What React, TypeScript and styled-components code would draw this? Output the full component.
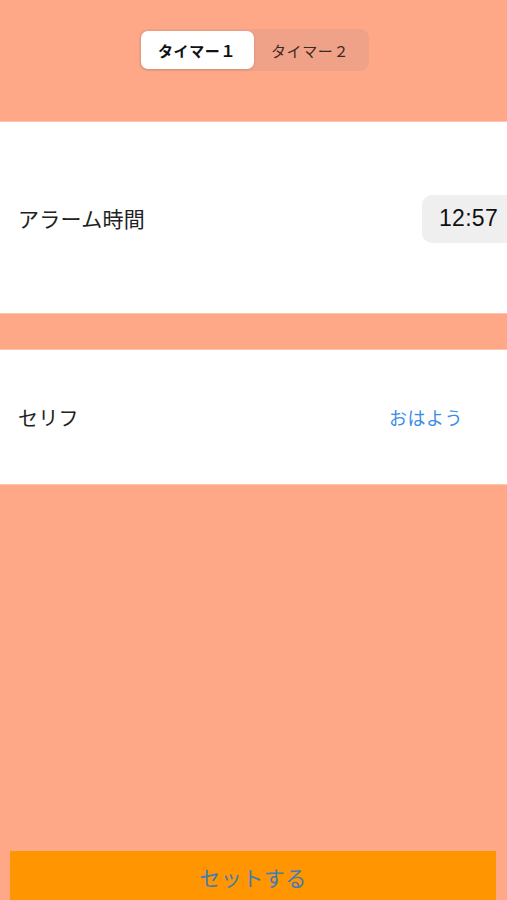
import React, { useState } from "react";
import styled, { createGlobalStyle } from "styled-components";

const GlobalStyle = createGlobalStyle`
  html, body {
    margin: 0;
    padding: 0;
    background: #FEA887;
  }
  body {
    font-family: "Noto Sans CJK JP", "Noto Sans", "Liberation Sans", sans-serif;
    -webkit-font-smoothing: antialiased;
  }
`;

const Page = styled.div`
  width: 507px;
  height: 900px;
  display: flex;
  flex-direction: column;
  background: #FEA887;
  overflow: hidden;
`;

const Header = styled.div`
  height: 122px;
  display: flex;
  justify-content: center;
  align-items: flex-start;
  padding-top: 29px;
  padding-left: 0;
  box-sizing: border-box;
  border-bottom: 1px solid #FFC3AE;
`;

const Segmented = styled.div`
  display: flex;
  padding: 2px;
  border-radius: 9px;
  background: #EFA287;
  height: 42px;
  box-sizing: border-box;
`;

const Segment = styled.button<{ $active: boolean }>`
  width: 113px;
  border: none;
  border-radius: 7px;
  margin: 0;
  padding: 0;
  font-family: inherit;
  font-size: 15px;
  letter-spacing: 0.6px;
  font-weight: ${(p) => (p.$active ? 700 : 400)};
  color: ${(p) => (p.$active ? "#111" : "#3a2a24")};
  background: ${(p) => (p.$active ? "#ffffff" : "transparent")};
  box-shadow: ${(p) => (p.$active ? "0 1px 3px rgba(0,0,0,0.12)" : "none")};
  cursor: pointer;
`;

const Section = styled.div<{ $height: number }>`
  height: ${(p) => p.$height}px;
  background: #ffffff;
  display: flex;
  align-items: center;
  justify-content: space-between;
  padding-left: 18px;
  box-sizing: border-box;
`;

const Gap = styled.div`
  height: 35px;
  border-top: 1px solid #FFC3AE;
  border-bottom: 1px solid #FFC3AE;
  box-sizing: content-box;
`;

const Label = styled.span<{ $size: number }>`
  font-size: ${(p) => p.$size}px;
  color: #222;
  letter-spacing: 0.3px;
`;

const TimePill = styled.div`
  width: 85px;
  height: 48px;
  margin-top: 2px;
  background: #EFEFF0;
  border-radius: 10px 0 0 10px;
  display: flex;
  align-items: center;
  padding-left: 17px;
  box-sizing: border-box;
  font-family: "Liberation Sans", "Noto Sans", sans-serif;
  font-size: 23px;
  color: #111;
  letter-spacing: 0.3px;
`;

const Value = styled.span`
  font-size: 18px;
  color: #3A8EE6;
  margin-right: 44px;
  letter-spacing: 0.5px;
`;

const Spacer = styled.div`
  flex: 1;
  border-top: 1px solid #FFC3AE;
`;

const ButtonWrap = styled.div`
  padding: 0 11px 0 10px;
`;

const SetButton = styled.button`
  width: 100%;
  height: 49px;
  border: none;
  background: #FF9500;
  color: #3F7CB8;
  font-family: inherit;
  font-size: 21px;
  letter-spacing: 0.5px;
  padding: 3px 0 0 0;
  cursor: pointer;
`;

export default function App() {
  const [tab, setTab] = useState(0);
  return (
    <>
      <GlobalStyle />
      <Page>
        <Header>
          <Segmented>
            <Segment $active={tab === 0} onClick={() => setTab(0)}>
              タイマー１
            </Segment>
            <Segment $active={tab === 1} onClick={() => setTab(1)}>
              タイマー２
            </Segment>
          </Segmented>
        </Header>
        <Section $height={191}>
          <Label $size={21}>アラーム時間</Label>
          <TimePill>12:57</TimePill>
        </Section>
        <Gap />
        <Section $height={134}>
          <Label $size={20}>セリフ</Label>
          <Value>おはよう</Value>
        </Section>
        <Spacer />
        <ButtonWrap>
          <SetButton>セットする</SetButton>
        </ButtonWrap>
      </Page>
    </>
  );
}
